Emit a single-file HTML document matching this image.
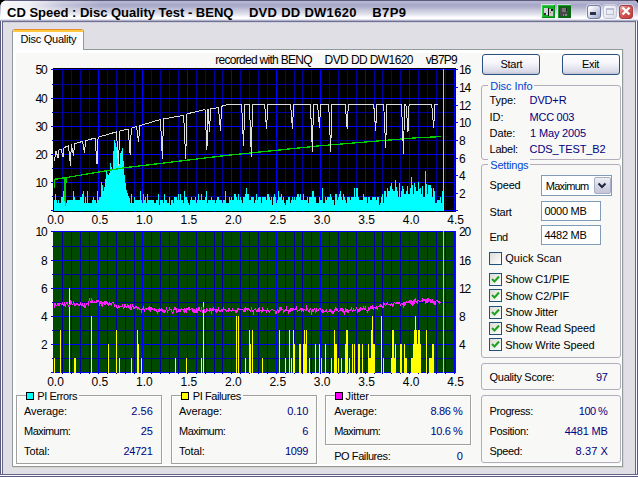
<!DOCTYPE html>
<html><head><meta charset="utf-8"><title>CD Speed : Disc Quality Test</title>
<style>
html,body{margin:0;padding:0;}
body{width:638px;height:477px;background:#000;overflow:hidden;position:relative;font-family:"Liberation Sans",sans-serif;font-size:11px;color:#000;}
div,span{box-sizing:border-box;}
.abs,.t{position:absolute;white-space:pre;line-height:12px;}
#win{position:absolute;left:0;top:0;width:638px;height:477px;background:#e0dfe6;border-radius:8px 5px 0 0;overflow:hidden;}
#tbar{position:absolute;left:0;top:0;width:638px;height:23px;background:linear-gradient(90deg,rgba(255,255,255,.92) 0,rgba(255,255,255,.8) 28px,rgba(255,255,255,.35) 60px,rgba(255,255,255,0) 100px) 1px 1px/100px 17px no-repeat,linear-gradient(#5c5c7c 0,#5c5c7c 1px,#b4b4d0 1px,#b6b6d2 3px,#a8a8c8 4px,#a9a9c9 6px,#c6c6da 10px,#e0e0ec 14px,#fafafe 17px,#ffffff 18px,#ffffff 19px,#e4e4ee 19px,#e4e4ee 20px,#b0b0c8 20px,#b0b0c8 21px,#707094 21px,#707094 22px,#d0d0dc 22px);}
#fl{position:absolute;left:0;top:21px;width:3px;height:455px;background:linear-gradient(90deg,#585878 0,#585878 1px,#fbfbff 1px,#fbfbff 2px,#646488 2px);}
#fr{position:absolute;left:635px;top:21px;width:3px;height:455px;background:linear-gradient(90deg,#646488 0,#646488 1px,#fbfbff 1px,#fbfbff 2px,#585878 2px);}
#fb{position:absolute;left:0;top:474px;width:638px;height:3px;background:linear-gradient(#646488 0,#646488 1px,#fbfbff 1px,#fbfbff 2px,#585878 2px);}
#pane{position:absolute;left:12px;top:49px;width:611px;height:418px;background:#f8f8f7;border:1px solid #919b9c;box-shadow:1px 1px 0 #d6d4c6, inset 2px 2px 0 1px #fff, inset -1px -1px 0 1px #fff;}
#tab{position:absolute;left:12px;top:29px;width:72px;height:21px;background:#fcfcfe;border:1px solid #919b9c;border-bottom:none;border-top:none;border-radius:3px 3px 0 0;overflow:hidden;}
#tab:before{content:"";position:absolute;left:-1px;top:0;width:72px;height:3px;background:linear-gradient(#e68b2c 0,#e68b2c 1px,#ffc73c 1px);}
.grp{position:absolute;border:1px solid #b4acba;border-radius:3px;}
.grp2{position:absolute;border:1px solid #a0a0a0;box-shadow:1px 1px 0 #fff,inset 1px 1px 0 #fff;}
.gt{position:absolute;background:#f8f8f7;}
.btn{position:absolute;border:1px solid #27507e;border-radius:3px;background:linear-gradient(#ffffff 0,#f6f6fb 40%,#dcdce9 85%,#c3c3d6 100%);}
.inp{position:absolute;border:1px solid #7f9db9;background:#fff;}
.cb{position:absolute;width:13px;height:13px;border:1px solid #1c5180;background:linear-gradient(135deg,#dcdcd7,#ffffff);}
.cb svg{position:absolute;left:1px;top:1px;}
.sw{position:absolute;width:8px;height:8px;border:1px solid #000;}
</style></head><body>
<div id="win">
<div id="tbar"></div>
<!-- title icons -->
<svg class="abs" style="left:541px;top:4px" width="31" height="16" shape-rendering="crispEdges">
<rect x="0" y="0" width="14" height="15" fill="#e8e8f4" opacity=".8"/>
<rect x="1" y="1" width="13" height="13" fill="#12b024"/>
<rect x="1" y="1" width="13" height="1" fill="#30d040"/><rect x="1" y="1" width="1" height="13" fill="#30d040"/>
<rect x="1" y="13" width="13" height="1" fill="#0a8a18"/><rect x="13" y="1" width="1" height="13" fill="#0a8a18"/>
<rect x="3" y="4" width="4" height="7" fill="#d4d4d4"/><rect x="3" y="9" width="2" height="2" fill="#303030"/>
<rect x="6.5" y="4" width="1.5" height="8" fill="#101010"/>
<rect x="8" y="5" width="3.5" height="7" fill="#c8c8c8"/><rect x="9.5" y="4.5" width="2" height="2" fill="#101010"/><rect x="8.5" y="8" width="1" height="1" fill="#606060"/>
<rect x="16" y="0" width="14" height="15" fill="#e8e8f4" opacity=".7"/>
<rect x="17" y="1" width="13" height="13" fill="#0a6414"/>
<rect x="17" y="1" width="13" height="1" fill="#18a028"/><rect x="17" y="1" width="1" height="13" fill="#18a028"/>
<rect x="19" y="4" width="8" height="8" fill="#484848"/>
<rect x="21" y="4" width="3.5" height="4" fill="#767676"/><rect x="25" y="4" width="1" height="3" fill="#202020"/>
<rect x="21.5" y="9.5" width="4" height="2.5" fill="#8c8c8c"/><rect x="22.5" y="10" width="1" height="2" fill="#404040"/>
</svg>
<div class="abs" style="left:587px;top:5px;width:14px;height:14px;border:1px solid #7480a6;border-radius:3px;background:linear-gradient(135deg,#ffffff 10%,#d4d8ea 50%,#9ca5c8 100%);box-shadow:0 0 0 1px rgba(255,255,255,.45);"><div class="abs" style="left:2px;top:6px;width:6px;height:3px;background:#2a3350"></div></div>
<div class="abs" style="left:603px;top:5px;width:14px;height:14px;border:1px solid #c4c6d6;border-radius:3px;background:linear-gradient(135deg,#fafaff,#dcdde9);box-shadow:0 0 0 1px rgba(255,255,255,.45);"><div class="abs" style="left:2px;top:2px;width:8px;height:7px;border:1px solid #bcbfd0;border-top-width:2px"></div></div>
<div class="abs" style="left:619px;top:5px;width:14px;height:14px;border:1px solid #a84040;border-radius:3px;background:linear-gradient(135deg,#eeb0a8 5%,#d45858 40%,#c03c3c 100%);box-shadow:0 0 0 1px rgba(255,255,255,.45);"><svg width="12" height="12" style="position:absolute;left:0;top:-1px"><path d="M2.5 2.5L9.5 9.5M9.5 2.5L2.5 9.5" stroke="#fff" stroke-width="2.4" fill="none"/></svg></div>
<div id="fl"></div><div id="fr"></div><div id="fb"></div>
<div id="pane"></div>
<div id="tab"></div>

<!-- right column -->
<div class="btn" style="left:482px;top:54px;width:58px;height:21px"></div>
<div class="btn" style="left:562px;top:54px;width:58px;height:21px"></div>
<div class="grp" style="left:481px;top:85px;width:140px;height:75px"></div>
<div class="gt" style="left:488px;top:80px;width:46px;height:12px"></div>
<div class="grp" style="left:481px;top:164px;width:140px;height:194px"></div>
<div class="gt" style="left:488px;top:159px;width:42px;height:12px"></div>
<div class="inp" style="left:541px;top:175px;width:71px;height:21px"></div>
<div class="abs" style="left:594px;top:177px;width:17px;height:17px;border:1px solid #a8aec8;border-radius:2px;background:linear-gradient(#eeeef6,#c2c4d8);"><svg width="14" height="15" style="position:absolute;left:0;top:0"><path d="M3.5 5.5L7 9L10.5 5.5" stroke="#1d2440" stroke-width="2" fill="none"/></svg></div>
<div class="inp" style="left:541px;top:201px;width:60px;height:20px"></div>
<div class="inp" style="left:541px;top:225px;width:60px;height:20px"></div>
<div class="cb" style="left:489px;top:252px"></div>
<div class="cb" style="left:489px;top:273px"><svg width="9" height="9"><path d="M1 4L3.5 6.5L8 1.5" stroke="#21a121" stroke-width="2" fill="none"/></svg></div>
<div class="cb" style="left:489px;top:289px"><svg width="9" height="9"><path d="M1 4L3.5 6.5L8 1.5" stroke="#21a121" stroke-width="2" fill="none"/></svg></div>
<div class="cb" style="left:489px;top:306px"><svg width="9" height="9"><path d="M1 4L3.5 6.5L8 1.5" stroke="#21a121" stroke-width="2" fill="none"/></svg></div>
<div class="cb" style="left:489px;top:322px"><svg width="9" height="9"><path d="M1 4L3.5 6.5L8 1.5" stroke="#21a121" stroke-width="2" fill="none"/></svg></div>
<div class="cb" style="left:489px;top:338px"><svg width="9" height="9"><path d="M1 4L3.5 6.5L8 1.5" stroke="#21a121" stroke-width="2" fill="none"/></svg></div>
<div class="grp" style="left:481px;top:363px;width:140px;height:27px"></div>
<div class="grp" style="left:481px;top:395px;width:140px;height:68px"></div>
<!-- bottom stats -->
<div class="grp2" style="left:16px;top:395px;width:146px;height:69px"></div>
<div class="gt" style="left:26px;top:390px;width:53px;height:12px"></div>
<div class="sw" style="left:26px;top:392px;background:#00ffff"></div>
<div class="grp2" style="left:171px;top:395px;width:146px;height:69px"></div>
<div class="gt" style="left:181px;top:390px;width:62px;height:12px"></div>
<div class="sw" style="left:181px;top:392px;background:#ffff00"></div>
<div class="grp2" style="left:325px;top:395px;width:146px;height:50px"></div>
<div class="gt" style="left:335px;top:390px;width:35px;height:12px"></div>
<div class="sw" style="left:335px;top:392px;background:#ff00ff"></div>
<svg width="638" height="477" viewBox="0 0 638 477" style="position:absolute;left:0;top:0" shape-rendering="crispEdges">
<rect x="53" y="68" width="403" height="144" fill="#000000"/>
<rect x="62" y="69" width="1" height="143" fill="#00009c"/>
<rect x="71" y="69" width="1" height="143" fill="#00009c"/>
<rect x="80" y="69" width="1" height="143" fill="#00009c"/>
<rect x="89" y="69" width="1" height="143" fill="#00009c"/>
<rect x="98" y="69" width="1" height="143" fill="#0000ff"/>
<rect x="107" y="69" width="1" height="143" fill="#00009c"/>
<rect x="116" y="69" width="1" height="143" fill="#00009c"/>
<rect x="125" y="69" width="1" height="143" fill="#00009c"/>
<rect x="134" y="69" width="1" height="143" fill="#00009c"/>
<rect x="142" y="69" width="1" height="143" fill="#0000ff"/>
<rect x="151" y="69" width="1" height="143" fill="#00009c"/>
<rect x="160" y="69" width="1" height="143" fill="#00009c"/>
<rect x="169" y="69" width="1" height="143" fill="#00009c"/>
<rect x="178" y="69" width="1" height="143" fill="#00009c"/>
<rect x="187" y="69" width="1" height="143" fill="#0000ff"/>
<rect x="196" y="69" width="1" height="143" fill="#00009c"/>
<rect x="205" y="69" width="1" height="143" fill="#00009c"/>
<rect x="214" y="69" width="1" height="143" fill="#00009c"/>
<rect x="222" y="69" width="1" height="143" fill="#00009c"/>
<rect x="231" y="69" width="1" height="143" fill="#0000ff"/>
<rect x="240" y="69" width="1" height="143" fill="#00009c"/>
<rect x="249" y="69" width="1" height="143" fill="#00009c"/>
<rect x="258" y="69" width="1" height="143" fill="#00009c"/>
<rect x="267" y="69" width="1" height="143" fill="#00009c"/>
<rect x="276" y="69" width="1" height="143" fill="#0000ff"/>
<rect x="285" y="69" width="1" height="143" fill="#00009c"/>
<rect x="294" y="69" width="1" height="143" fill="#00009c"/>
<rect x="302" y="69" width="1" height="143" fill="#00009c"/>
<rect x="311" y="69" width="1" height="143" fill="#00009c"/>
<rect x="320" y="69" width="1" height="143" fill="#0000ff"/>
<rect x="329" y="69" width="1" height="143" fill="#00009c"/>
<rect x="338" y="69" width="1" height="143" fill="#00009c"/>
<rect x="347" y="69" width="1" height="143" fill="#00009c"/>
<rect x="356" y="69" width="1" height="143" fill="#00009c"/>
<rect x="365" y="69" width="1" height="143" fill="#0000ff"/>
<rect x="374" y="69" width="1" height="143" fill="#00009c"/>
<rect x="382" y="69" width="1" height="143" fill="#00009c"/>
<rect x="391" y="69" width="1" height="143" fill="#00009c"/>
<rect x="400" y="69" width="1" height="143" fill="#00009c"/>
<rect x="409" y="69" width="1" height="143" fill="#0000ff"/>
<rect x="418" y="69" width="1" height="143" fill="#00009c"/>
<rect x="427" y="69" width="1" height="143" fill="#00009c"/>
<rect x="436" y="69" width="1" height="143" fill="#00009c"/>
<rect x="445" y="69" width="1" height="143" fill="#00009c"/>
<rect x="454" y="69" width="1" height="143" fill="#0000ff"/>
<rect x="51" y="69" width="403" height="1" fill="#0000ff"/>
<rect x="52" y="84" width="402" height="1" fill="#00009c"/>
<rect x="51" y="98" width="403" height="1" fill="#0000ff"/>
<rect x="52" y="112" width="402" height="1" fill="#00009c"/>
<rect x="51" y="126" width="403" height="1" fill="#0000ff"/>
<rect x="52" y="140" width="402" height="1" fill="#00009c"/>
<rect x="51" y="154" width="403" height="1" fill="#0000ff"/>
<rect x="52" y="168" width="402" height="1" fill="#00009c"/>
<rect x="51" y="182" width="403" height="1" fill="#0000ff"/>
<rect x="52" y="196" width="402" height="1" fill="#00009c"/>
<rect x="51" y="210" width="403" height="1" fill="#0000ff"/>
<rect x="454" y="69" width="4" height="1" fill="#0000ff"/>
<rect x="454" y="78" width="2" height="1" fill="#0000ff"/>
<rect x="454" y="87" width="4" height="1" fill="#0000ff"/>
<rect x="454" y="96" width="2" height="1" fill="#0000ff"/>
<rect x="454" y="105" width="4" height="1" fill="#0000ff"/>
<rect x="454" y="114" width="2" height="1" fill="#0000ff"/>
<rect x="454" y="122" width="4" height="1" fill="#0000ff"/>
<rect x="454" y="131" width="2" height="1" fill="#0000ff"/>
<rect x="454" y="140" width="4" height="1" fill="#0000ff"/>
<rect x="454" y="149" width="2" height="1" fill="#0000ff"/>
<rect x="454" y="158" width="4" height="1" fill="#0000ff"/>
<rect x="454" y="166" width="2" height="1" fill="#0000ff"/>
<rect x="454" y="175" width="4" height="1" fill="#0000ff"/>
<rect x="454" y="184" width="2" height="1" fill="#0000ff"/>
<rect x="454" y="193" width="4" height="1" fill="#0000ff"/>
<rect x="454" y="202" width="2" height="1" fill="#0000ff"/>
<rect x="454" y="210" width="4" height="1" fill="#0000ff"/>
<path d="M54 211V200H55V194H56V200H57V203H58V200H59V203H60V203H61V197H62V197H63V191H64V200H65V205H66V203H67V200H68V200H69V200H70V200H71V200H72V200H73V191H74V197H75V200H76V200H77V200H78V200H79V200H80V197H81V197H82V194H83V191H84V203H85V197H86V203H87V191H88V203H89V203H90V203H91V203H92V200H93V197H94V200H95V200H96V203H97V191H98V200H99V197H100V197H101V182H102V185H103V191H104V187H105V179H106V170H107V174H108V175H109V173H110V163H111V167H112V169H113V151H114V140H115V143H116V147H117V150H118V155H119V164H120V153H121V151H122V148H123V161H124V175H125V183H126V190H127V193H128V196H129V198H130V203H131V194H132V203H133V203H134V197H135V200H136V200H137V200H138V200H139V200H140V191H141V200H142V203H143V194H144V200H145V197H146V203H147V194H148V200H149V200H150V200H151V200H152V200H153V200H154V203H155V203H156V200H157V200H158V194H159V205H160V200H161V200H162V200H163V203H164V194H165V200H166V200H167V203H168V203H169V197H170V205H171V200H172V200H173V203H174V197H175V197H176V197H177V200H178V194H179V200H180V194H181V200H182V200H183V203H184V191H185V197H186V197H187V200H188V203H189V205H190V200H191V197H192V200H193V200H194V200H195V197H196V203H197V200H198V194H199V200H200V200H201V194H202V200H203V200H204V200H205V197H206V191H207V203H208V200H209V200H210V200H211V197H212V200H213V200H214V200H215V203H216V200H217V197H218V197H219V200H220V200H221V200H222V203H223V200H224V200H225V191H226V203H227V203H228V203H229V197H230V200H231V197H232V200H233V200H234V194H235V194H236V197H237V200H238V194H239V200H240V197H241V200H242V203H243V197H244V197H245V194H246V188H247V194H248V194H249V200H250V200H251V197H252V197H253V197H254V203H255V200H256V194H257V200H258V197H259V197H260V197H261V203H262V197H263V197H264V197H265V197H266V200H267V194H268V194H269V197H270V200H271V197H272V205H273V197H274V194H275V197H276V203H277V200H278V191H279V197H280V197H281V194H282V200H283V197H284V203H285V205H286V200H287V200H288V197H289V197H290V203H291V200H292V197H293V200H294V197H295V200H296V197H297V194H298V194H299V197H300V194H301V200H302V200H303V194H304V200H305V200H306V200H307V197H308V203H309V197H310V197H311V197H312V191H313V191H314V197H315V197H316V203H317V203H318V203H319V197H320V200H321V200H322V188H323V203H324V203H325V197H326V200H327V197H328V197H329V197H330V194H331V197H332V200H333V200H334V205H335V194H336V194H337V200H338V197H339V194H340V191H341V197H342V200H343V194H344V197H345V200H346V203H347V197H348V197H349V197H350V200H351V197H352V197H353V197H354V188H355V197H356V188H357V188H358V197H359V200H360V200H361V200H362V200H363V194H364V197H365V197H366V197H367V203H368V197H369V197H370V200H371V200H372V197H373V197H374V197H375V197H376V200H377V197H378V197H379V205H380V203H381V197H382V194H383V203H384V191H385V191H386V197H387V188H388V191H389V191H390V186H391V183H392V189H393V191H394V191H395V180H396V187H397V191H398V197H399V183H400V197H401V191H402V186H403V189H404V194H405V194H406V191H407V186H408V194H409V194H410V188H411V177H412V185H413V194H414V183H415V187H416V191H417V191H418V182H419V189H420V188H421V194H422V186H423V197H424V197H425V171H426V184H427V194H428V185H429V185H430V185H431V188H432V197H433V188H434V191H435V203H436V203H437V200H438V200H439V200H440V197H441V203H442V191H443V192H444V211Z" fill="#00ffff"/>
<polyline fill="none" stroke="#00d000" stroke-width="1.3" points="54.5,188 54.5,179.3 64.5,177.8 65.3,205.6 66,177.6 125,167.7 225,155.6 320,145.8 415,137.9 440.7,136.6"/>
<polyline fill="none" stroke="#dcdcdc" stroke-width="1" points="54.5,161.0 55.8,151.0 56.0,151.0 56.4,152.4 58.0,158.0 59.1,149.7 60.8,149.0 61.4,150.6 63.0,157.0 64.1,147.6 68.0,146.0 68.3,145.9 68.9,149.8 70.5,165.5 71.3,144.9 71.6,144.8 71.9,147.1 73.5,156.0 74.6,143.8 77.0,143.0 82.3,141.5 82.9,143.8 84.5,153.0 85.6,140.6 86.0,140.5 94.8,138.1 95.0,138.0 95.4,143.2 97.0,164.0 98.1,137.2 99.0,137.0 116.0,132.0 116.3,131.9 116.9,138.7 118.5,166.0 119.6,131.1 128.0,129.0 128.0,129.0 128.6,134.3 130.2,155.4 131.3,128.1 136.4,126.6 137.0,129.8 138.6,142.4 139.7,125.7 141.0,125.3 160.0,119.6 160.2,119.6 160.8,127.4 162.4,158.6 163.5,119.0 183.0,115.4 183.5,115.2 184.1,123.9 185.7,158.6 186.8,114.0 188.0,113.6 204.8,109.6 205.0,109.6 205.4,117.8 207.0,150.2 207.3,109.3 207.9,113.8 208.1,109.2 209.5,132.0 210.6,108.8 218.0,107.8 218.3,107.7 218.9,112.3 220.5,130.6 221.6,106.4 222.5,106.0 230.0,104.0 241.4,104.0 242.0,112.5 243.6,146.3 244.7,104.0 249.2,104.0 249.8,114.6 251.4,156.8 252.5,104.0 264.4,104.0 265.0,109.1 266.6,129.3 267.7,104.0 290.3,104.0 290.9,109.0 292.5,129.0 293.6,104.0 310.2,104.0 310.8,113.5 312.4,151.5 313.5,104.0 317.3,104.0 317.9,108.8 319.5,128.0 320.6,104.0 328.5,104.0 329.1,113.5 330.7,151.5 331.8,104.0 345.0,104.0 345.6,109.1 347.2,129.3 348.3,104.0 373.5,104.0 374.1,109.3 375.7,130.6 376.8,104.0 383.5,104.0 384.1,112.8 385.7,148.0 386.8,104.0 401.3,104.0 401.9,113.9 403.5,153.6 404.6,104.0 405.8,104.0 406.4,109.6 408.0,132.0 409.1,104.0 431.5,104.0 432.1,108.8 433.7,128.0 434.8,104.0 438.0,104.0"/>
<rect x="443" y="69" width="1" height="142" fill="#c0c0c0"/>
<rect x="53" y="231" width="403" height="142" fill="#004a00"/>
<rect x="62" y="231" width="1" height="143" fill="#00009c"/>
<rect x="71" y="231" width="1" height="143" fill="#00009c"/>
<rect x="80" y="231" width="1" height="143" fill="#00009c"/>
<rect x="89" y="231" width="1" height="143" fill="#00009c"/>
<rect x="98" y="231" width="1" height="143" fill="#0000ff"/>
<rect x="107" y="231" width="1" height="143" fill="#00009c"/>
<rect x="116" y="231" width="1" height="143" fill="#00009c"/>
<rect x="125" y="231" width="1" height="143" fill="#00009c"/>
<rect x="134" y="231" width="1" height="143" fill="#00009c"/>
<rect x="142" y="231" width="1" height="143" fill="#0000ff"/>
<rect x="151" y="231" width="1" height="143" fill="#00009c"/>
<rect x="160" y="231" width="1" height="143" fill="#00009c"/>
<rect x="169" y="231" width="1" height="143" fill="#00009c"/>
<rect x="178" y="231" width="1" height="143" fill="#00009c"/>
<rect x="187" y="231" width="1" height="143" fill="#0000ff"/>
<rect x="196" y="231" width="1" height="143" fill="#00009c"/>
<rect x="205" y="231" width="1" height="143" fill="#00009c"/>
<rect x="214" y="231" width="1" height="143" fill="#00009c"/>
<rect x="222" y="231" width="1" height="143" fill="#00009c"/>
<rect x="231" y="231" width="1" height="143" fill="#0000ff"/>
<rect x="240" y="231" width="1" height="143" fill="#00009c"/>
<rect x="249" y="231" width="1" height="143" fill="#00009c"/>
<rect x="258" y="231" width="1" height="143" fill="#00009c"/>
<rect x="267" y="231" width="1" height="143" fill="#00009c"/>
<rect x="276" y="231" width="1" height="143" fill="#0000ff"/>
<rect x="285" y="231" width="1" height="143" fill="#00009c"/>
<rect x="294" y="231" width="1" height="143" fill="#00009c"/>
<rect x="302" y="231" width="1" height="143" fill="#00009c"/>
<rect x="311" y="231" width="1" height="143" fill="#00009c"/>
<rect x="320" y="231" width="1" height="143" fill="#0000ff"/>
<rect x="329" y="231" width="1" height="143" fill="#00009c"/>
<rect x="338" y="231" width="1" height="143" fill="#00009c"/>
<rect x="347" y="231" width="1" height="143" fill="#00009c"/>
<rect x="356" y="231" width="1" height="143" fill="#00009c"/>
<rect x="365" y="231" width="1" height="143" fill="#0000ff"/>
<rect x="374" y="231" width="1" height="143" fill="#00009c"/>
<rect x="382" y="231" width="1" height="143" fill="#00009c"/>
<rect x="391" y="231" width="1" height="143" fill="#00009c"/>
<rect x="400" y="231" width="1" height="143" fill="#00009c"/>
<rect x="409" y="231" width="1" height="143" fill="#0000ff"/>
<rect x="418" y="231" width="1" height="143" fill="#00009c"/>
<rect x="427" y="231" width="1" height="143" fill="#00009c"/>
<rect x="436" y="231" width="1" height="143" fill="#00009c"/>
<rect x="445" y="231" width="1" height="143" fill="#00009c"/>
<rect x="454" y="231" width="1" height="143" fill="#0000ff"/>
<rect x="51" y="231" width="403" height="1" fill="#0000ff"/>
<rect x="52" y="246" width="402" height="1" fill="#00009c"/>
<rect x="51" y="260" width="403" height="1" fill="#0000ff"/>
<rect x="52" y="274" width="402" height="1" fill="#00009c"/>
<rect x="51" y="288" width="403" height="1" fill="#0000ff"/>
<rect x="52" y="302" width="402" height="1" fill="#00009c"/>
<rect x="51" y="316" width="403" height="1" fill="#0000ff"/>
<rect x="52" y="330" width="402" height="1" fill="#00009c"/>
<rect x="51" y="344" width="403" height="1" fill="#0000ff"/>
<rect x="52" y="358" width="402" height="1" fill="#00009c"/>
<rect x="51" y="372" width="403" height="1" fill="#0000ff"/>
<rect x="54" y="358" width="1" height="15" fill="#ffff00"/>
<rect x="60" y="330" width="1" height="43" fill="#ffff00"/>
<rect x="69" y="288" width="1" height="85" fill="#ffff00"/>
<rect x="74" y="358" width="1" height="15" fill="#ffff00"/>
<rect x="75" y="358" width="1" height="15" fill="#ffff00"/>
<rect x="91" y="316" width="1" height="57" fill="#ffff00"/>
<rect x="108" y="344" width="1" height="29" fill="#ffff00"/>
<rect x="116" y="330" width="1" height="43" fill="#ffff00"/>
<rect x="119" y="358" width="1" height="15" fill="#ffff00"/>
<rect x="131" y="358" width="1" height="15" fill="#ffff00"/>
<rect x="137" y="330" width="1" height="43" fill="#ffff00"/>
<rect x="138" y="344" width="1" height="29" fill="#ffff00"/>
<rect x="141" y="358" width="1" height="15" fill="#ffff00"/>
<rect x="175" y="358" width="1" height="15" fill="#ffff00"/>
<rect x="186" y="358" width="1" height="15" fill="#ffff00"/>
<rect x="201" y="358" width="1" height="15" fill="#ffff00"/>
<rect x="203" y="302" width="1" height="71" fill="#ffff00"/>
<rect x="236" y="316" width="1" height="57" fill="#ffff00"/>
<rect x="238" y="316" width="1" height="57" fill="#ffff00"/>
<rect x="245" y="358" width="1" height="15" fill="#ffff00"/>
<rect x="249" y="330" width="1" height="43" fill="#ffff00"/>
<rect x="250" y="344" width="1" height="29" fill="#ffff00"/>
<rect x="252" y="330" width="1" height="43" fill="#ffff00"/>
<rect x="262" y="358" width="1" height="15" fill="#ffff00"/>
<rect x="279" y="330" width="1" height="43" fill="#ffff00"/>
<rect x="285" y="358" width="1" height="15" fill="#ffff00"/>
<rect x="289" y="330" width="1" height="43" fill="#ffff00"/>
<rect x="291" y="358" width="1" height="15" fill="#ffff00"/>
<rect x="293" y="330" width="1" height="43" fill="#ffff00"/>
<rect x="294" y="344" width="1" height="29" fill="#ffff00"/>
<rect x="299" y="344" width="1" height="29" fill="#ffff00"/>
<rect x="300" y="344" width="1" height="29" fill="#ffff00"/>
<rect x="303" y="344" width="1" height="29" fill="#ffff00"/>
<rect x="304" y="330" width="1" height="43" fill="#ffff00"/>
<rect x="305" y="344" width="1" height="29" fill="#ffff00"/>
<rect x="306" y="330" width="1" height="43" fill="#ffff00"/>
<rect x="309" y="358" width="1" height="15" fill="#ffff00"/>
<rect x="315" y="344" width="1" height="29" fill="#ffff00"/>
<rect x="319" y="344" width="1" height="29" fill="#ffff00"/>
<rect x="321" y="358" width="1" height="15" fill="#ffff00"/>
<rect x="325" y="344" width="1" height="29" fill="#ffff00"/>
<rect x="331" y="358" width="1" height="15" fill="#ffff00"/>
<rect x="334" y="330" width="1" height="43" fill="#ffff00"/>
<rect x="335" y="344" width="1" height="29" fill="#ffff00"/>
<rect x="336" y="344" width="1" height="29" fill="#ffff00"/>
<rect x="338" y="358" width="1" height="15" fill="#ffff00"/>
<rect x="341" y="358" width="1" height="15" fill="#ffff00"/>
<rect x="345" y="344" width="1" height="29" fill="#ffff00"/>
<rect x="346" y="330" width="1" height="43" fill="#ffff00"/>
<rect x="347" y="330" width="1" height="43" fill="#ffff00"/>
<rect x="349" y="358" width="1" height="15" fill="#ffff00"/>
<rect x="352" y="344" width="1" height="29" fill="#ffff00"/>
<rect x="354" y="344" width="1" height="29" fill="#ffff00"/>
<rect x="358" y="344" width="1" height="29" fill="#ffff00"/>
<rect x="359" y="344" width="1" height="29" fill="#ffff00"/>
<rect x="362" y="344" width="1" height="29" fill="#ffff00"/>
<rect x="368" y="344" width="1" height="29" fill="#ffff00"/>
<rect x="369" y="358" width="1" height="15" fill="#ffff00"/>
<rect x="370" y="358" width="1" height="15" fill="#ffff00"/>
<rect x="371" y="330" width="1" height="43" fill="#ffff00"/>
<rect x="372" y="316" width="1" height="57" fill="#ffff00"/>
<rect x="373" y="344" width="1" height="29" fill="#ffff00"/>
<rect x="374" y="344" width="1" height="29" fill="#ffff00"/>
<rect x="381" y="316" width="1" height="57" fill="#ffff00"/>
<rect x="383" y="358" width="1" height="15" fill="#ffff00"/>
<rect x="391" y="358" width="1" height="15" fill="#ffff00"/>
<rect x="392" y="330" width="1" height="43" fill="#ffff00"/>
<rect x="393" y="330" width="1" height="43" fill="#ffff00"/>
<rect x="394" y="358" width="1" height="15" fill="#ffff00"/>
<rect x="395" y="344" width="1" height="29" fill="#ffff00"/>
<rect x="400" y="344" width="1" height="29" fill="#ffff00"/>
<rect x="401" y="344" width="1" height="29" fill="#ffff00"/>
<rect x="404" y="344" width="1" height="29" fill="#ffff00"/>
<rect x="405" y="358" width="1" height="15" fill="#ffff00"/>
<rect x="406" y="358" width="1" height="15" fill="#ffff00"/>
<rect x="411" y="358" width="1" height="15" fill="#ffff00"/>
<rect x="412" y="358" width="1" height="15" fill="#ffff00"/>
<rect x="413" y="344" width="1" height="29" fill="#ffff00"/>
<rect x="414" y="330" width="1" height="43" fill="#ffff00"/>
<rect x="415" y="316" width="1" height="57" fill="#ffff00"/>
<rect x="416" y="330" width="1" height="43" fill="#ffff00"/>
<rect x="417" y="344" width="1" height="29" fill="#ffff00"/>
<rect x="418" y="330" width="1" height="43" fill="#ffff00"/>
<rect x="419" y="330" width="1" height="43" fill="#ffff00"/>
<rect x="420" y="344" width="1" height="29" fill="#ffff00"/>
<rect x="426" y="330" width="1" height="43" fill="#ffff00"/>
<rect x="429" y="358" width="1" height="15" fill="#ffff00"/>
<rect x="430" y="358" width="1" height="15" fill="#ffff00"/>
<rect x="431" y="358" width="1" height="15" fill="#ffff00"/>
<rect x="432" y="344" width="1" height="29" fill="#ffff00"/>
<rect x="433" y="344" width="1" height="29" fill="#ffff00"/>
<polyline fill="none" stroke="#ff20ff" stroke-width="1" points="54.0,303.2 54.7,306.2 55.4,304.2 56.1,306.2 56.8,305.2 57.5,304.2 58.2,305.2 58.9,303.2 59.6,305.2 60.3,303.2 61.0,304.2 61.7,304.2 62.4,303.2 63.1,305.2 63.8,305.2 64.5,303.2 65.2,306.2 65.9,304.2 66.6,302.2 67.3,302.2 68.0,305.2 68.7,306.2 69.4,306.2 70.1,304.2 70.8,301.2 71.5,302.2 72.2,304.2 72.9,304.2 73.6,302.2 74.3,304.2 75.0,306.2 75.7,304.2 76.4,304.2 77.1,303.2 77.8,304.2 78.5,305.2 79.2,304.2 79.9,305.2 80.6,303.2 81.3,304.2 82.0,306.2 82.7,304.2 83.4,306.2 84.1,307.2 84.8,304.2 85.5,306.2 86.2,304.0 86.9,303.3 87.6,303.6 88.3,304.9 89.0,301.2 89.7,299.2 90.4,302.3 91.1,302.3 91.8,298.4 92.5,302.4 93.2,302.5 93.9,302.5 94.6,301.6 95.3,302.6 96.0,302.6 96.7,300.7 97.4,300.9 98.1,301.3 98.8,300.6 99.5,305.0 100.2,303.3 100.9,300.7 101.6,303.8 102.3,306.8 103.0,301.9 103.7,303.0 104.4,304.1 105.1,301.1 105.8,305.2 106.5,302.3 107.2,304.4 107.9,302.4 108.6,304.5 109.3,302.6 110.0,304.7 110.7,303.7 111.4,304.8 112.1,302.9 112.8,302.0 113.5,304.0 114.2,304.1 114.9,306.2 115.6,305.3 116.3,305.4 117.0,307.5 117.7,308.6 118.4,305.7 119.1,307.7 119.8,306.8 120.5,306.9 121.2,306.0 121.9,306.1 122.6,305.2 123.3,308.3 124.0,308.4 124.7,304.5 125.4,304.6 126.1,307.7 126.8,307.8 127.5,303.9 128.2,308.0 128.9,305.1 129.6,309.1 130.3,304.2 131.0,310.3 131.7,308.4 132.4,304.5 133.1,306.6 133.8,308.7 134.5,308.8 135.2,306.9 135.9,308.0 136.6,307.1 137.3,309.2 138.0,307.3 138.7,308.4 139.4,308.5 140.1,309.5 140.8,309.6 141.5,311.7 142.2,308.8 142.9,308.9 143.6,307.0 144.3,311.1 145.0,309.2 145.7,308.2 146.4,309.3 147.1,308.3 147.8,308.3 148.5,307.4 149.2,311.4 149.9,306.5 150.6,311.5 151.3,307.5 152.0,309.6 152.7,308.6 153.4,309.6 154.1,308.7 154.8,310.7 155.5,309.8 156.2,309.8 156.9,311.8 157.6,312.9 158.3,309.9 159.0,311.9 159.7,309.0 160.4,310.0 161.1,311.0 161.8,309.0 162.5,310.0 163.2,312.0 163.9,310.0 164.6,312.0 165.3,311.0 166.0,310.0 166.7,308.0 167.4,312.0 168.1,310.0 168.8,311.0 169.5,308.0 170.2,310.0 170.9,309.0 171.6,311.0 172.3,313.0 173.0,313.0 173.7,310.0 174.4,308.0 175.1,310.0 175.8,307.0 176.5,312.0 177.2,311.0 177.9,312.0 178.6,310.0 179.3,311.0 180.0,309.0 180.7,311.0 181.4,309.0 182.1,310.0 182.8,309.0 183.5,310.0 184.2,313.0 184.9,309.0 185.6,310.0 186.3,313.0 187.0,308.0 187.7,309.0 188.4,309.0 189.1,307.0 189.8,310.0 190.5,309.0 191.2,309.0 191.9,308.0 192.6,311.0 193.3,310.0 194.0,313.0 194.7,309.0 195.4,312.0 196.1,312.0 196.8,308.0 197.5,313.0 198.2,310.0 198.9,307.0 199.6,310.0 200.3,311.0 201.0,310.0 201.7,308.0 202.4,312.0 203.1,310.0 203.8,308.0 204.5,311.0 205.2,313.0 205.9,312.0 206.6,309.0 207.3,310.0 208.0,310.0 208.7,310.0 209.4,311.0 210.1,308.1 210.8,310.1 211.5,312.1 212.2,308.1 212.9,311.1 213.6,308.1 214.3,309.1 215.0,309.1 215.7,311.1 216.4,312.1 217.1,309.1 217.8,312.1 218.5,307.1 219.2,311.1 219.9,312.1 220.6,310.1 221.3,310.1 222.0,309.1 222.7,312.1 223.4,307.1 224.1,310.1 224.8,309.1 225.5,310.1 226.2,311.1 226.9,310.1 227.6,310.1 228.3,311.1 229.0,308.1 229.7,310.1 230.4,310.1 231.1,310.1 231.8,311.1 232.5,309.1 233.2,310.1 233.9,310.1 234.6,310.1 235.3,312.1 236.0,310.1 236.7,312.1 237.4,311.1 238.1,308.1 238.8,309.1 239.5,309.1 240.2,309.1 240.9,309.1 241.6,309.1 242.3,309.1 243.0,310.1 243.7,311.1 244.4,308.1 245.1,312.1 245.8,308.1 246.5,309.1 247.2,310.1 247.9,308.1 248.6,309.1 249.3,309.1 250.0,311.1 250.7,311.1 251.4,308.1 252.1,310.1 252.8,311.1 253.5,313.1 254.2,309.1 254.9,310.1 255.6,309.1 256.3,311.1 257.0,312.1 257.7,310.1 258.4,311.1 259.1,307.1 259.8,311.1 260.5,310.1 261.2,310.1 261.9,313.1 262.6,307.1 263.3,310.1 264.0,310.1 264.7,310.1 265.4,310.1 266.1,310.1 266.8,312.1 267.5,309.1 268.2,311.1 268.9,310.1 269.6,313.1 270.3,310.1 271.0,310.1 271.7,309.1 272.4,309.1 273.1,310.1 273.8,310.1 274.5,310.1 275.2,311.1 275.9,313.1 276.6,313.1 277.3,309.1 278.0,310.1 278.7,313.1 279.4,310.1 280.1,307.1 280.8,310.1 281.5,308.1 282.2,309.1 282.9,310.1 283.6,312.1 284.3,311.1 285.0,310.1 285.7,310.1 286.4,308.1 287.1,311.1 287.8,310.1 288.5,312.1 289.2,309.1 289.9,312.1 290.6,309.1 291.3,310.1 292.0,308.1 292.7,310.1 293.4,309.1 294.1,310.1 294.8,309.1 295.5,309.1 296.2,307.1 296.9,310.1 297.6,311.1 298.3,310.1 299.0,311.1 299.7,309.1 300.4,309.1 301.1,308.1 301.8,312.1 302.5,308.1 303.2,311.1 303.9,309.1 304.6,309.1 305.3,310.1 306.0,311.1 306.7,307.1 307.4,309.1 308.1,310.1 308.8,311.2 309.5,312.2 310.2,308.2 310.9,309.2 311.6,313.2 312.3,311.2 313.0,309.2 313.7,311.2 314.4,309.2 315.1,310.2 315.8,313.2 316.5,309.2 317.2,310.2 317.9,310.2 318.6,310.2 319.3,308.2 320.0,308.2 320.7,309.2 321.4,311.2 322.1,312.2 322.8,309.2 323.5,312.2 324.2,311.2 324.9,311.2 325.6,311.2 326.3,310.2 327.0,312.2 327.7,312.2 328.4,311.2 329.1,311.2 329.8,309.2 330.5,309.2 331.2,313.2 331.9,310.2 332.6,313.2 333.3,313.2 334.0,311.2 334.7,311.2 335.4,307.2 336.1,310.2 336.8,308.2 337.5,310.2 338.2,311.2 338.9,311.2 339.6,310.2 340.3,310.2 341.0,308.2 341.7,310.2 342.4,309.2 343.1,312.2 343.8,310.2 344.5,313.2 345.2,311.2 345.9,308.2 346.6,312.2 347.3,309.2 348.0,313.2 348.7,310.2 349.4,310.2 350.1,311.2 350.8,310.2 351.5,308.2 352.2,311.2 352.9,311.2 353.6,309.2 354.3,310.2 355.0,311.2 355.7,309.2 356.4,308.2 357.1,309.2 357.8,313.2 358.5,309.1 359.2,309.0 359.9,311.9 360.6,306.8 361.3,309.7 362.0,309.6 362.7,309.5 363.4,306.4 364.1,309.3 364.8,308.2 365.5,307.1 366.2,311.0 366.9,310.9 367.6,311.8 368.3,309.7 369.0,307.6 369.7,309.5 370.4,308.4 371.1,306.3 371.8,308.2 372.5,305.1 373.2,309.9 373.9,307.8 374.6,307.6 375.3,307.4 376.0,309.3 376.7,306.1 377.4,309.0 378.1,306.8 378.8,306.6 379.5,306.5 380.2,304.3 380.9,306.1 381.6,306.0 382.3,306.8 383.0,307.7 383.7,302.5 384.4,304.3 385.1,305.2 385.8,305.1 386.5,305.0 387.2,302.9 387.9,303.8 388.6,304.7 389.3,304.6 390.0,304.5 390.7,305.4 391.4,303.3 392.1,304.3 392.8,306.2 393.5,305.1 394.2,302.0 394.9,302.9 395.6,303.8 396.3,303.7 397.0,302.6 397.7,303.5 398.4,303.4 399.1,302.3 399.8,303.2 400.5,306.2 401.2,303.1 401.9,303.0 402.6,304.0 403.3,305.9 404.0,301.9 404.7,305.8 405.4,302.8 406.1,302.7 406.8,301.7 407.5,302.6 408.2,302.5 408.9,301.5 409.6,300.4 410.3,304.4 411.0,300.3 411.7,304.3 412.4,305.2 413.1,300.2 413.8,305.1 414.5,300.0 415.2,299.0 415.9,301.9 416.6,301.9 417.3,302.8 418.0,299.8 418.7,300.8 419.4,301.7 420.1,301.7 420.8,301.6 421.5,300.6 422.2,301.5 422.9,298.5 423.6,300.4 424.3,300.4 425.0,299.3 425.7,303.3 426.4,302.2 427.1,298.2 427.8,303.1 428.5,299.1 429.2,300.1 429.9,299.0 430.6,302.0 431.3,301.1 432.0,303.1 432.7,299.1 433.4,304.2 434.1,301.2 434.8,304.2 435.5,304.2 436.2,300.3 436.9,300.3 437.6,300.3 438.3,302.4 439.0,301.4 439.7,303.4 440.4,301.5"/>
<rect x="443" y="231" width="1" height="142" fill="#c0c0c0"/>
</svg>
<div class="t" style="left:35.50px;top:63px;font-size:12px;line-height:14px;letter-spacing:-1.148px;">50</div>
<div class="t" style="left:35.50px;top:92px;font-size:12px;line-height:14px;letter-spacing:-1.148px;">40</div>
<div class="t" style="left:35.50px;top:120px;font-size:12px;line-height:14px;letter-spacing:-1.148px;">30</div>
<div class="t" style="left:35.50px;top:148px;font-size:12px;line-height:14px;letter-spacing:-1.148px;">20</div>
<div class="t" style="left:35.50px;top:176px;font-size:12px;line-height:14px;letter-spacing:-1.148px;">10</div>
<div class="t" style="left:458.90px;top:63px;font-size:12px;line-height:14px;letter-spacing:-1.148px;">16</div>
<div class="t" style="left:458.90px;top:81px;font-size:12px;line-height:14px;letter-spacing:-1.148px;">14</div>
<div class="t" style="left:458.90px;top:99px;font-size:12px;line-height:14px;letter-spacing:-1.148px;">12</div>
<div class="t" style="left:458.90px;top:116px;font-size:12px;line-height:14px;letter-spacing:-1.148px;">10</div>
<div class="t" style="left:458.90px;top:134px;font-size:12px;line-height:14px;">8</div>
<div class="t" style="left:458.90px;top:152px;font-size:12px;line-height:14px;">6</div>
<div class="t" style="left:458.90px;top:169px;font-size:12px;line-height:14px;">4</div>
<div class="t" style="left:458.90px;top:187px;font-size:12px;line-height:14px;">2</div>
<div class="t" style="left:35.50px;top:225px;font-size:12px;line-height:14px;letter-spacing:-1.148px;">10</div>
<div class="t" style="left:41.03px;top:254px;font-size:12px;line-height:14px;">8</div>
<div class="t" style="left:41.03px;top:282px;font-size:12px;line-height:14px;">6</div>
<div class="t" style="left:41.03px;top:310px;font-size:12px;line-height:14px;">4</div>
<div class="t" style="left:41.03px;top:338px;font-size:12px;line-height:14px;">2</div>
<div class="t" style="left:458.90px;top:225px;font-size:12px;line-height:14px;letter-spacing:-1.148px;">20</div>
<div class="t" style="left:458.90px;top:254px;font-size:12px;line-height:14px;letter-spacing:-1.148px;">16</div>
<div class="t" style="left:458.90px;top:282px;font-size:12px;line-height:14px;letter-spacing:-1.148px;">12</div>
<div class="t" style="left:458.90px;top:310px;font-size:12px;line-height:14px;">8</div>
<div class="t" style="left:458.90px;top:338px;font-size:12px;line-height:14px;">4</div>
<div class="t" style="left:47.16px;top:213px;font-size:12px;line-height:14px;">0.0</div>
<div class="t" style="left:47.16px;top:375px;font-size:12px;line-height:14px;">0.0</div>
<div class="t" style="left:91.61px;top:213px;font-size:12px;line-height:14px;">0.5</div>
<div class="t" style="left:91.61px;top:375px;font-size:12px;line-height:14px;">0.5</div>
<div class="t" style="left:136.06px;top:213px;font-size:12px;line-height:14px;">1.0</div>
<div class="t" style="left:136.06px;top:375px;font-size:12px;line-height:14px;">1.0</div>
<div class="t" style="left:180.51px;top:213px;font-size:12px;line-height:14px;">1.5</div>
<div class="t" style="left:180.51px;top:375px;font-size:12px;line-height:14px;">1.5</div>
<div class="t" style="left:224.96px;top:213px;font-size:12px;line-height:14px;">2.0</div>
<div class="t" style="left:224.96px;top:375px;font-size:12px;line-height:14px;">2.0</div>
<div class="t" style="left:269.41px;top:213px;font-size:12px;line-height:14px;">2.5</div>
<div class="t" style="left:269.41px;top:375px;font-size:12px;line-height:14px;">2.5</div>
<div class="t" style="left:313.86px;top:213px;font-size:12px;line-height:14px;">3.0</div>
<div class="t" style="left:313.86px;top:375px;font-size:12px;line-height:14px;">3.0</div>
<div class="t" style="left:358.31px;top:213px;font-size:12px;line-height:14px;">3.5</div>
<div class="t" style="left:358.31px;top:375px;font-size:12px;line-height:14px;">3.5</div>
<div class="t" style="left:402.76px;top:213px;font-size:12px;line-height:14px;">4.0</div>
<div class="t" style="left:402.76px;top:375px;font-size:12px;line-height:14px;">4.0</div>
<div class="t" style="left:447.21px;top:213px;font-size:12px;line-height:14px;">4.5</div>
<div class="t" style="left:447.21px;top:375px;font-size:12px;line-height:14px;">4.5</div>
<div class="t" style="left:215.30px;top:53px;font-size:12px;line-height:14px;"><span style="letter-spacing:-0.716px">recorded with BENQ</span><span style="letter-spacing:-0.134px">    </span><span style="letter-spacing:-0.594px">DVD DD DW1620</span><span style="letter-spacing:-0.159px">    </span><span style="letter-spacing:-0.851px">vB7P9</span></div>
<div class="t" style="left:7.10px;top:5px;font-size:13px;line-height:15px;font-weight:bold;"><span style="letter-spacing:-0.008px">CD Speed : Disc Quality Test - BENQ</span><span style="letter-spacing:0.263px">    </span><span style="letter-spacing:0.290px">DVD DD DW1620</span><span style="letter-spacing:0.288px">    </span><span style="letter-spacing:0.395px">B7P9</span></div>
<div class="t" style="left:20.50px;top:33px;letter-spacing:-0.244px;">Disc Quality</div>
<div class="t" style="left:489.60px;top:94px;letter-spacing:-0.126px;">Type:</div>
<div class="t" style="left:529.60px;top:94px;color:#000080;letter-spacing:-0.148px;">DVD+R</div>
<div class="t" style="left:489.60px;top:111px;letter-spacing:-0.028px;">ID:</div>
<div class="t" style="left:529.60px;top:111px;color:#000080;letter-spacing:-0.277px;">MCC 003</div>
<div class="t" style="left:489.60px;top:127px;letter-spacing:-0.123px;">Date:</div>
<div class="t" style="left:530.10px;top:127px;color:#000080;letter-spacing:-0.165px;">1 May 2005</div>
<div class="t" style="left:489.60px;top:143px;letter-spacing:-0.294px;">Label:</div>
<div class="t" style="left:529.60px;top:143px;color:#000080;letter-spacing:-0.093px;">CDS_TEST_B2</div>
<div class="t" style="left:489.60px;top:179px;letter-spacing:-0.177px;">Speed</div>
<div class="t" style="left:489.60px;top:206px;letter-spacing:-0.233px;">Start</div>
<div class="t" style="left:489.60px;top:231px;letter-spacing:-0.487px;">End</div>
<div class="t" style="left:505.30px;top:252px;letter-spacing:-0.005px;">Quick Scan</div>
<div class="t" style="left:505.30px;top:273px;letter-spacing:-0.122px;">Show C1/PIE</div>
<div class="t" style="left:505.30px;top:290px;letter-spacing:-0.100px;">Show C2/PIF</div>
<div class="t" style="left:505.30px;top:306px;letter-spacing:-0.211px;">Show Jitter</div>
<div class="t" style="left:505.30px;top:322px;letter-spacing:-0.138px;">Show Read Speed</div>
<div class="t" style="left:505.30px;top:339px;letter-spacing:-0.107px;">Show Write Speed</div>
<div class="t" style="left:489.60px;top:371px;letter-spacing:-0.314px;">Quality Score:</div>
<div class="t" style="left:596.00px;top:371px;color:#000080;letter-spacing:-0.336px;">97</div>
<div class="t" style="left:489.60px;top:405px;letter-spacing:-0.434px;">Progress:</div>
<div class="t" style="left:578.80px;top:405px;color:#000080;letter-spacing:-0.523px;">100 %</div>
<div class="t" style="left:489.60px;top:425px;letter-spacing:-0.386px;">Position:</div>
<div class="t" style="left:564.80px;top:425px;color:#000080;letter-spacing:-0.155px;">4481 MB</div>
<div class="t" style="left:489.60px;top:445px;letter-spacing:-0.373px;">Speed:</div>
<div class="t" style="left:575.60px;top:445px;color:#000080;letter-spacing:0.099px;">8.37 X</div>
<div class="t" style="left:24.10px;top:405px;letter-spacing:-0.133px;">Average:</div>
<div class="t" style="left:131.30px;top:405px;color:#000080;letter-spacing:0.030px;">2.56</div>
<div class="t" style="left:24.10px;top:425px;letter-spacing:-0.575px;">Maximum:</div>
<div class="t" style="left:140.70px;top:425px;color:#000080;letter-spacing:-0.136px;">25</div>
<div class="t" style="left:24.10px;top:445px;letter-spacing:-0.098px;">Total:</div>
<div class="t" style="left:123.40px;top:445px;color:#000080;letter-spacing:-0.297px;">24721</div>
<div class="t" style="left:179.10px;top:405px;letter-spacing:-0.133px;">Average:</div>
<div class="t" style="left:287.30px;top:405px;color:#000080;letter-spacing:-0.137px;">0.10</div>
<div class="t" style="left:179.10px;top:425px;letter-spacing:-0.575px;">Maximum:</div>
<div class="t" style="left:302.18px;top:425px;color:#000080;">6</div>
<div class="t" style="left:179.10px;top:445px;letter-spacing:-0.098px;">Total:</div>
<div class="t" style="left:284.90px;top:445px;color:#000080;letter-spacing:-0.357px;">1099</div>
<div class="t" style="left:334.20px;top:405px;letter-spacing:-0.133px;">Average:</div>
<div class="t" style="left:430.50px;top:405px;color:#000080;letter-spacing:-0.369px;">8.86 %</div>
<div class="t" style="left:334.20px;top:425px;letter-spacing:-0.575px;">Maximum:</div>
<div class="t" style="left:430.50px;top:425px;color:#000080;letter-spacing:-0.369px;">10.6 %</div>
<div class="t" style="left:334.20px;top:450px;letter-spacing:-0.421px;">PO Failures:</div>
<div class="t" style="left:456.78px;top:450px;color:#000080;">0</div>
<div class="t" style="left:37.20px;top:390px;letter-spacing:-0.387px;">PI Errors</div>
<div class="t" style="left:192.70px;top:390px;letter-spacing:-0.397px;">PI Failures</div>
<div class="t" style="left:345.50px;top:390px;letter-spacing:-0.087px;">Jitter</div>
<div class="t" style="left:490.30px;top:80px;color:#0046d5;letter-spacing:-0.061px;">Disc Info</div>
<div class="t" style="left:490.30px;top:159px;color:#0046d5;letter-spacing:-0.207px;">Settings</div>
<div class="t" style="left:500.40px;top:58px;letter-spacing:-0.258px;">Start</div>
<div class="t" style="left:582.10px;top:58px;letter-spacing:-0.346px;">Exit</div>
<div class="t" style="left:545.70px;top:180px;letter-spacing:-0.678px;">Maximum</div>
<div class="t" style="left:544.40px;top:205px;letter-spacing:-0.271px;">0000 MB</div>
<div class="t" style="left:544.40px;top:229px;letter-spacing:-0.271px;">4482 MB</div>
</div>
</body></html>
